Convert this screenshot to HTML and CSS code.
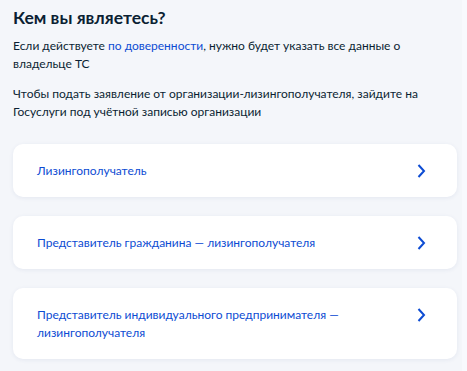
FILE: index.html
```html
<!DOCTYPE html>
<html lang="ru">
<head>
    <meta charset="UTF-8">
    <meta name="viewport" content="width=device-width, initial-scale=1.0">
    <title>Кем вы являетесь?</title>
    <link rel="stylesheet" href="styles.css">
</head>
<body>
    <div class="page">
        <h1>Кем вы являетесь?</h1>

        <p class="note">Если действуете <a href="#" class="link">по доверенности</a>, нужно будет указать все данные о владельце ТС</p>
        <p class="note">Чтобы подать заявление от организации-лизингополучателя, зайдите на Госуслуги под учётной записью организации</p>

        <div class="options">
            <a href="#" class="option">
                <span class="option-text">Лизингополучатель</span>
                <svg class="chevron" width="24" height="18" viewBox="0 0 24 18"><path d="M9.5 3 L15 9 L9.5 15" /></svg>
            </a>
            <a href="#" class="option">
                <span class="option-text">Представитель гражданина — лизингополучателя</span>
                <svg class="chevron" width="24" height="18" viewBox="0 0 24 18"><path d="M9.5 3 L15 9 L9.5 15" /></svg>
            </a>
            <a href="#" class="option">
                <span class="option-text">Представитель индивидуального предпринимателя — лизингополучателя</span>
                <svg class="chevron" width="24" height="18" viewBox="0 0 24 18"><path d="M9.5 3 L15 9 L9.5 15" /></svg>
            </a>
        </div>
    </div>
</body>
</html>
```

FILE: styles.css
```css
body {
    margin: 0;
    background-color: #f8f9fd;
    color: #0b1f33;
    font-family: 'Lato', 'Noto Sans', sans-serif;
}
.page {
    width: 444px;
    padding: 4px 5px 12px 13px;
    background-color: #f4f6fa;
}
h1 {
    margin: 0 0 6px;
    font-size: 17.5px;
    line-height: 27px;
    font-weight: 700;
}
.note {
    margin: 0 0 12px;
    font-size: 12px;
    line-height: 18px;
}
.link {
    color: #0d4cd3;
    text-decoration: none;
}
.options {
    display: flex;
    flex-direction: column;
    gap: 19px;
    margin-top: 23px;
}
.option {
    display: flex;
    align-items: flex-start;
    gap: 40px;
    padding: 18px 24px 17px;
    background-color: #fff;
    border-radius: 10px;
    box-shadow: 0 1px 4px rgba(40, 70, 130, 0.08);
    color: #0d4cd3;
    text-decoration: none;
    font-size: 12px;
    line-height: 18px;
}
.option-text {
    flex: 1;
}
.chevron {
    flex: none;
}
.chevron path {
    fill: none;
    stroke: #0d4cd3;
    stroke-width: 2;
}
```
